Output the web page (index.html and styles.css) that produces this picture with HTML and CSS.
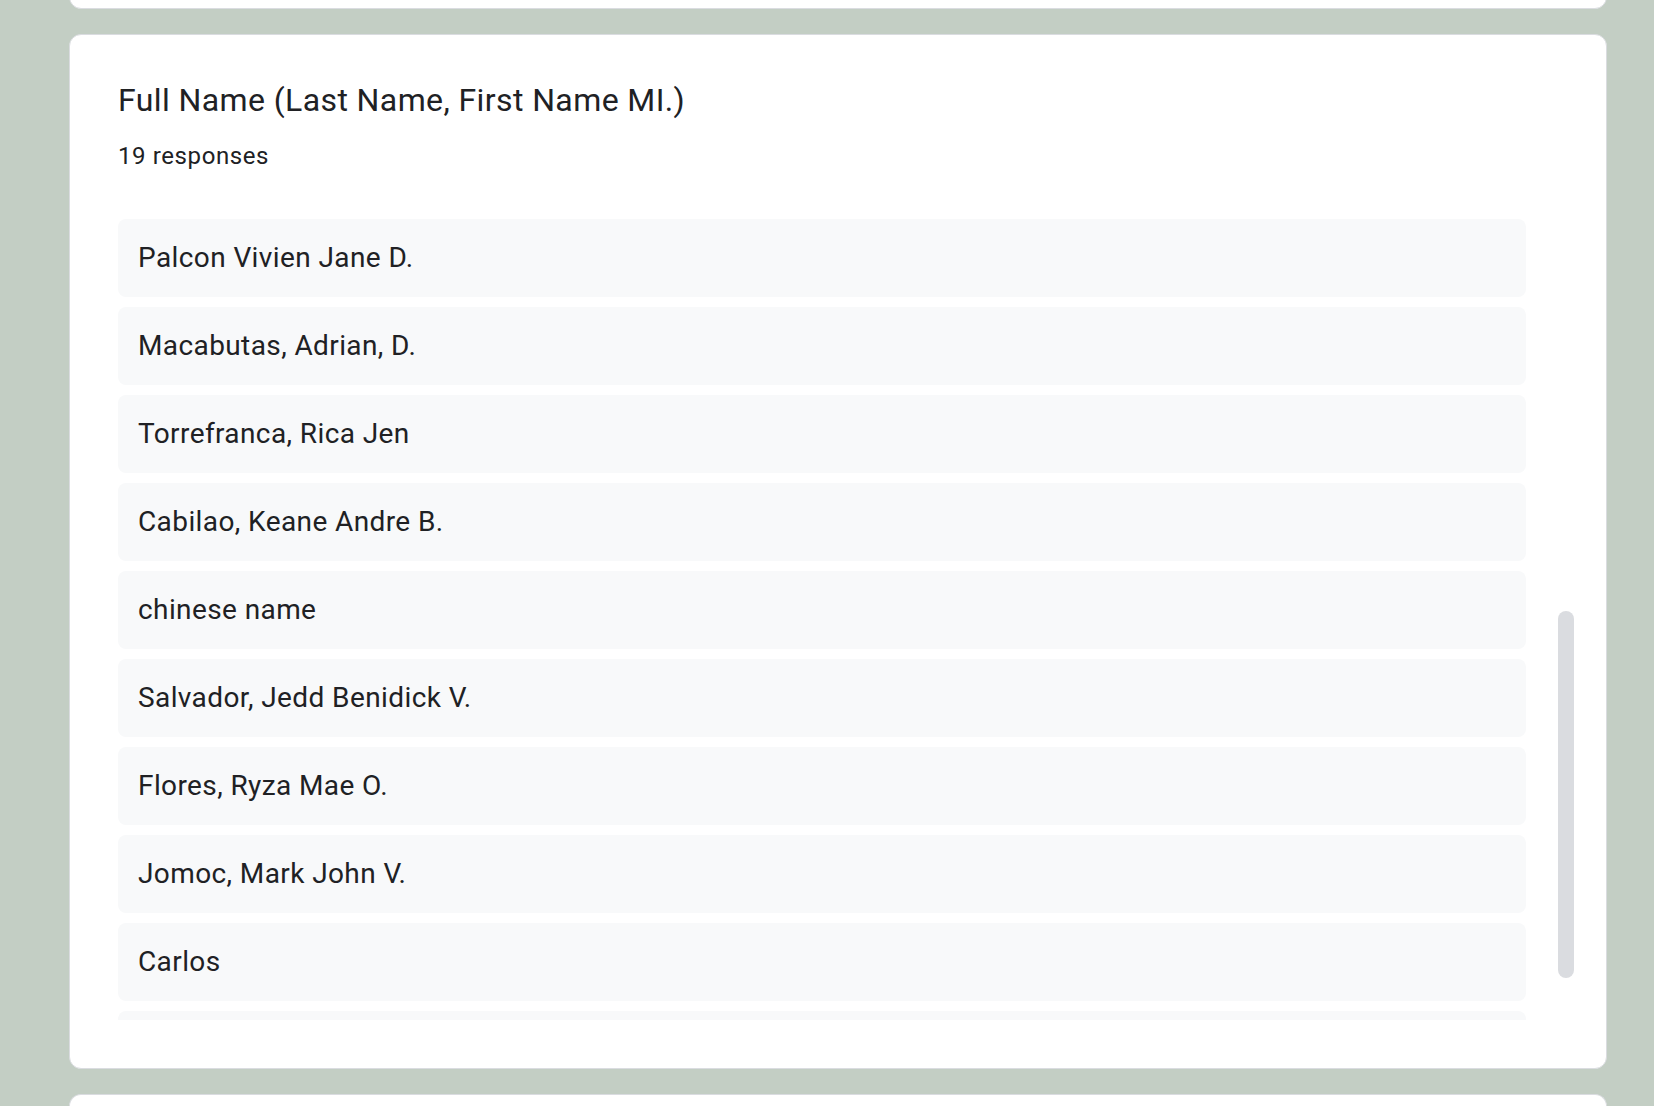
FILE: index.html
```html
<!DOCTYPE html>
<html lang="en">
<head>
<meta charset="utf-8">
<title>Full Name responses</title>
<link rel="stylesheet" href="styles.css">
</head>
<body>
<div class="page">
  <section class="card card-prev"></section>
  <section class="card card-main">
    <h2 class="q-title">Full Name (Last Name, First Name MI.)</h2>
    <div class="q-count">19 responses</div>
    <div class="scroll">
      <ul class="answers">
        <li>Palcon Vivien Jane D.</li>
        <li>Macabutas, Adrian, D.</li>
        <li>Torrefranca, Rica Jen</li>
        <li>Cabilao, Keane Andre B.</li>
        <li>chinese name</li>
        <li>Salvador, Jedd Benidick V.</li>
        <li>Flores, Ryza Mae O.</li>
        <li>Jomoc, Mark John V.</li>
        <li>Carlos</li>
        <li>&nbsp;</li>
      </ul>
      <div class="scrollbar"><div class="thumb"></div></div>
    </div>
  </section>
  <section class="card card-next"></section>
</div>
</body>
</html>
```
FILE: styles.css
```css
html, body {
  margin: 0;
  height: 100%;
  overflow: hidden;
  background: #c3cec4;
  font-family: Roboto, "Noto Sans", "Liberation Sans", sans-serif;
  color: #202124;
}

.page {
  margin-top: -91px;
  margin-left: 69px;
  width: 1538px;
  display: flex;
  flex-direction: column;
  gap: 25px;
}

.card {
  box-sizing: border-box;
  background: #fff;
  border: 1px solid #dadce0;
  border-radius: 12px;
  flex-shrink: 0;
}

.card-prev {
  height: 100px;
}

.card-next {
  height: 12px;
  border-bottom: 0;
  border-radius: 12px 12px 0 0;
}

.card-main {
  height: 1035px;
  padding: 45px 32px 48px 48px;
  display: flex;
  flex-direction: column;
}

.q-title {
  margin: 0;
  font-size: 32px;
  line-height: 40px;
  font-weight: 400;
  letter-spacing: 0.4px;
}

.q-count {
  margin-top: 20px;
  font-size: 24px;
  line-height: 32px;
  letter-spacing: 0.6px;
}

.scroll {
  margin-top: 47px;
  flex: 1;
  min-height: 0;
  display: flex;
  gap: 32px;
  overflow: hidden;
}

.answers {
  list-style: none;
  margin: 0;
  padding: 0;
  flex: 1;
  display: flex;
  flex-direction: column;
  gap: 10px;
}

.answers li {
  flex-shrink: 0;
  background: #f8f9fa;
  border-radius: 8px;
  padding: 23px 20px 23px;
  font-size: 28px;
  line-height: 32px;
  letter-spacing: 0.4px;
}

.scrollbar {
  width: 16px;
  flex-shrink: 0;
}

.thumb {
  margin-top: 392px;
  height: 367px;
  border-radius: 8px;
  background: #dadce0;
}
```
